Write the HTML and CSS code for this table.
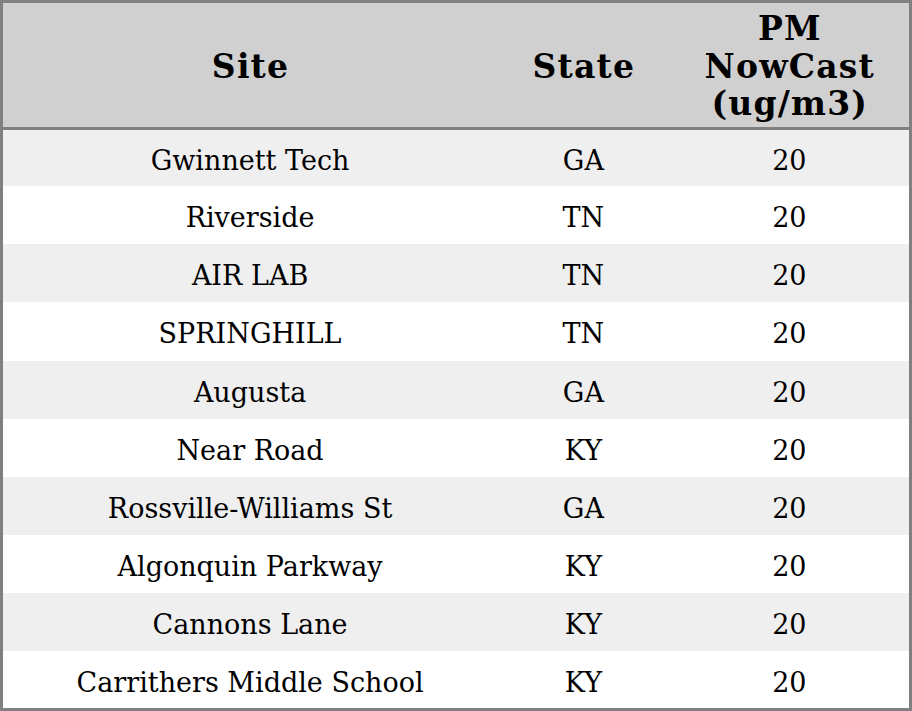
FILE: index.html
```html
<!DOCTYPE html>
<html>
<head>
<meta charset="utf-8">
<link rel="stylesheet" href="styles.css">
</head>
<body>
<table class="grid">
  <colgroup>
    <col class="c-site">
    <col class="c-state">
    <col class="c-pm">
  </colgroup>
  <thead>
    <tr><th>Site</th><th>State</th><th>PM<br>NowCast<br>(ug/m3)</th></tr>
  </thead>
  <tbody>
    <tr><td>Gwinnett Tech</td><td>GA</td><td>20</td></tr>
    <tr><td>Riverside</td><td>TN</td><td>20</td></tr>
    <tr><td>AIR LAB</td><td>TN</td><td>20</td></tr>
    <tr><td>SPRINGHILL</td><td>TN</td><td>20</td></tr>
    <tr><td>Augusta</td><td>GA</td><td>20</td></tr>
    <tr><td>Near Road</td><td>KY</td><td>20</td></tr>
    <tr><td>Rossville-Williams St</td><td>GA</td><td>20</td></tr>
    <tr><td>Algonquin Parkway</td><td>KY</td><td>20</td></tr>
    <tr><td>Cannons Lane</td><td>KY</td><td>20</td></tr>
    <tr><td>Carrithers Middle School</td><td>KY</td><td>20</td></tr>
  </tbody>
</table>
</body>
</html>
```
FILE: styles.css
```css
html, body {
  margin: 0;
  padding: 0;
  background: #ffffff;
}
.grid {
  width: 912px;
  height: 711px;
  border-collapse: collapse;
  border: 3px solid #808080;
  font-family: "DejaVu Serif", serif;
  color: #000;
  table-layout: fixed;
}
.c-site { width: 494px; }
.c-state { width: 172px; }
.c-pm { width: 240px; }
.grid thead tr {
  height: 126.5px;
}
.grid th {
  background: #d0d0d0;
  font-size: 33px;
  font-weight: bold;
  line-height: 37.5px;
  letter-spacing: 1.2px;
  text-align: center;
  vertical-align: middle;
  padding: 3px 0 0 1px;
  border-bottom: 3px solid #808080;
}
.grid tbody tr {
  height: 57.7px;
}
.grid td {
  font-size: 27px;
  text-align: center;
  vertical-align: middle;
  padding: 5px 0 0 0;
}
.grid tbody tr:nth-child(odd) td {
  background: #efefef;
}
```
